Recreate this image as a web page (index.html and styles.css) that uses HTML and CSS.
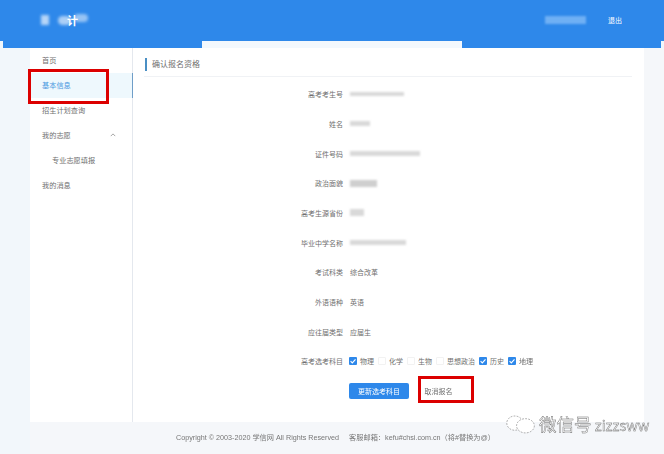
FILE: index.html
```html
<!DOCTYPE html>
<html lang="zh-CN">
<head>
<meta charset="utf-8">
<title>确认报名资格</title>
<link rel="stylesheet" href="styles.css">
</head>
<body>
<div class="page">
  <header class="header">
    <div class="logo"><i class="blob b1"></i><i class="blob b2"></i><i class="blob b3"></i><span class="logo-mark">计</span></div>
    <div class="user"><i class="user-name"></i><span class="logout">退出</span></div>
  </header>
  <div class="band"><i class="band-side"></i><i class="band-mid"></i><i class="band-side"></i></div>
  <div class="body-row">
    <div class="gutter"></div>
    <div class="column">
      <div class="card">
        <nav class="sidebar">
          <a class="nav-item">首页</a>
          <a class="nav-item active">基本信息</a>
          <a class="nav-item">招生计划查询</a>
          <a class="nav-item">我的志愿<svg class="caret" viewBox="0 0 8 5"><path d="M1 4l3-3 3 3" fill="none" stroke="#888" stroke-width="1"/></svg></a>
          <a class="nav-item sub">专业志愿填报</a>
          <a class="nav-item">我的消息</a>
        </nav>
        <main class="content">
          <h1 class="title">确认报名资格</h1>
          <div class="form">
            <div class="row"><span class="label">高考考生号</span><i class="mask m1"></i></div>
            <div class="row"><span class="label">姓名</span><i class="mask m2"></i></div>
            <div class="row"><span class="label">证件号码</span><i class="mask m3"></i></div>
            <div class="row"><span class="label">政治面貌</span><i class="mask m4"></i></div>
            <div class="row"><span class="label">高考生源省份</span><i class="mask m5"></i></div>
            <div class="row"><span class="label">毕业中学名称</span><i class="mask m6"></i></div>
            <div class="row"><span class="label">考试科类</span><span>综合改革</span></div>
            <div class="row"><span class="label">外语语种</span><span>英语</span></div>
            <div class="row"><span class="label">应往届类型</span><span>应届生</span></div>
            <div class="row"><span class="label">高考选考科目</span>
              <div class="subjects">
                <span class="subject"><i class="box on"><svg viewBox="0 0 8 8"><path d="M1.6 4.2l1.7 1.7 3.2-3.6" fill="none" stroke="#fff" stroke-width="1.1"/></svg></i>物理</span>
                <span class="subject"><i class="box"></i>化学</span>
                <span class="subject"><i class="box"></i>生物</span>
                <span class="subject"><i class="box"></i>思想政治</span>
                <span class="subject"><i class="box on"><svg viewBox="0 0 8 8"><path d="M1.6 4.2l1.7 1.7 3.2-3.6" fill="none" stroke="#fff" stroke-width="1.1"/></svg></i>历史</span>
                <span class="subject"><i class="box on"><svg viewBox="0 0 8 8"><path d="M1.6 4.2l1.7 1.7 3.2-3.6" fill="none" stroke="#fff" stroke-width="1.1"/></svg></i>地理</span>
              </div>
            </div>
            <div class="actions">
              <button class="btn primary">更新选考科目</button>
              <button class="btn plain">取消报名</button>
            </div>
          </div>
        </main>
      </div>
      <footer class="footer"><span>Copyright © 2003-2020 学信网 All Rights Reserved</span><span>客服邮箱：kefu#chsi.com.cn（将#替换为@）</span></footer>
    </div>
  </div>
</div>
<i class="mark mark-nav"></i>
<i class="mark mark-cancel"></i>
<div class="watermark">
  <svg class="wm-icon" viewBox="0 0 36 24"><g fill="#fff" stroke="#777" stroke-width=".7" stroke-dasharray="2 1.5"><ellipse cx="11" cy="11" rx="9" ry="8"/><ellipse cx="23" cy="14" rx="10" ry="8"/></g></svg>
  <span class="wm-text"><span class="wm-cjk">微信号</span> zizzsww</span>
</div>
</body>
</html>
```
FILE: styles.css
```css
* { box-sizing: border-box; }
html, body { margin: 0; height: 100%; }
body { overflow: hidden; background: #f5f7fa; font-family: "Noto Sans CJK SC", "Liberation Sans", sans-serif; font-size: 7.2px; color: #6f6f6f; position: relative; }
i { display: block; }
.page { height: 454px; display: flex; flex-direction: column; filter: blur(.5px); }

.header { height: 41px; flex: none; background: #2e88ea; display: flex; align-items: center; justify-content: space-between; padding: 0 42px 0 40px; color: #fff; }
.logo { display: flex; align-items: center; position: relative; width: 50px; height: 14px; margin-top: -1px; }
.logo-mark { position: absolute; left: 27px; top: 1px; font-size: 11px; line-height: 12px; font-weight: 700; }
.blob { position: absolute; background: #fff; filter: blur(1.4px); }
.b1 { left: 1px; top: 2px; width: 8px; height: 10px; opacity: .65; }
.b2 { left: 18px; top: 3px; width: 13px; height: 9px; border-radius: 5px; opacity: .6; }
.b3 { left: 34px; top: 1px; width: 14px; height: 8px; border-radius: 4px; opacity: .5; }
.user { display: flex; align-items: center; gap: 22px; margin-top: -1px; }
.user-name { width: 41px; height: 8px; background: #6fb0f4; filter: blur(1px); }
.logout { font-size: 7px; }

.band { height: 7px; flex: none; display: flex; padding: 0 3px; background: #f1f7fc; }
.band-side { width: 199px; background: #2e88ea; }
.band-mid { flex: 1; background: #f3f8fd; }

.body-row { flex: 1; display: flex; min-height: 0; }
.gutter { width: 30px; flex: none; background: #f2f7fb; }
.column { flex: 1; display: flex; flex-direction: column; }
.card { width: 614px; height: 374px; background: #fff; display: flex; flex: none; }

.sidebar { width: 103px; flex: none; border-right: 1px solid #e4e8ee; display: flex; flex-direction: column; }
.nav-item { height: 25px; display: flex; align-items: center; padding: 0 0 2px 12px; position: relative; flex: none; }
.nav-item.active { color: #4a97e0; background: #eef8fd; border-right: 1px solid #6f9ec8; margin-right: -1px; }
.nav-item.sub { padding-left: 22px; }
.caret { position: absolute; left: 80px; top: 10px; width: 6px; height: 4px; }

.content { flex: 1; padding: 10px 12px 0 11px; font-size: 7px; }
.title { margin: 0 0 0 1px; padding-left: 5px; font-size: 8px; font-weight: 400; line-height: 11px; border-left: 2px solid #4a8fc4; height: 13px; }
.form { margin-top: 5px; border-top: 1px solid #f0f2f5; padding-top: 2.5px; }
.row { height: 29.67px; display: flex; align-items: center; gap: 6px; }
.label { width: 199px; text-align: right; flex: none; }
.row > span:not(.label) { margin-left: 1px; }
.mask { background: #d9d9d9; filter: blur(1.3px); margin-left: 1px; }
.m1 { width: 54px; height: 4px; }
.m2 { width: 20px; height: 5px; }
.m3 { width: 70px; height: 5px; }
.m4 { width: 27px; height: 7px; background: #cfcfcf; }
.m5 { width: 14px; height: 7px; }
.m6 { width: 56px; height: 5px; }
.subjects { display: flex; gap: 4px; }
.subject { display: flex; align-items: center; gap: 3px; }
.box { width: 8px; height: 8px; border: 1px solid #f2f2f2; border-radius: 1px; flex: none; }
.box.on { border: 0; background: #2e88ea; }
.box svg { display: block; width: 8px; height: 8px; }
.actions { display: flex; margin: 7px 0 0 205px; }
.btn { font: inherit; height: 16px; border-radius: 2px; padding: 0; }
.primary { width: 60px; background: #2e88ea; color: #fff; border: 0; }
.plain { width: 53px; background: #fff; color: #6f6f6f; border: 0; padding-left: 6px; }

.footer { flex: 1; display: flex; align-items: center; gap: 10px; padding: 0 0 2px 146px; color: #777; font-family: "Liberation Sans", "Noto Sans CJK SC", sans-serif; font-size: 7.2px; }

.mark { position: absolute; border: 3px solid #dc0000; }
.mark-nav { left: 28px; top: 69px; width: 81px; height: 35px; }
.mark-cancel { left: 418px; top: 376px; width: 56px; height: 27px; }

.watermark { position: absolute; left: 505px; top: 412px; display: flex; align-items: center; gap: 2px; height: 24px; }
.wm-icon { width: 32px; height: 22px; }
.wm-text { font-size: 14.5px; line-height: 24px; color: #fff; -webkit-text-stroke: .4px #666; white-space: nowrap; }
.wm-cjk { font-size: 17.5px; }
```
